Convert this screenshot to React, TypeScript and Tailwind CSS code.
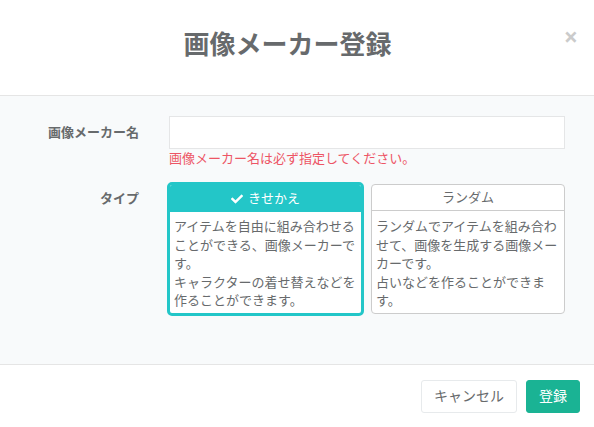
import React from "react";
import { FaCheck } from "react-icons/fa";

export default function App() {
  const font = { fontFamily: '"Open Sans", "Noto Sans CJK JP", sans-serif' };
  return (
    <div className="w-[594px] h-[427px] overflow-hidden bg-white text-[#676a6c] text-[13px] leading-[18.57px]" style={font}>
      {/* Header */}
      <div className="relative h-[96px] border-b border-[#e5e5e5] pt-[30px] pr-[19px] text-center">
        <h4 className="text-[26px] leading-[28px] font-bold text-[#676a6c]">画像メーカー登録</h4>
        <button className="absolute right-[16px] top-[22px] text-[25px] leading-[28px] font-bold text-black opacity-20">×</button>
      </div>

      {/* Body */}
      <div className="h-[268px] bg-[#f8fafb] pt-[20px]">
        <div className="flex">
          <label className="w-[139px] text-right font-bold pt-[7px]">画像メーカー名</label>
          <div className="ml-[30px] w-[396px]">
            <input className="block w-full h-[33px] bg-white border border-[#e5e6e7] outline-none" />
            <div className="text-[#ed5565] leading-[19px]">画像メーカー名は必ず指定してください。</div>
          </div>
        </div>

        <div className="flex mt-[14px]">
          <label className="w-[139px] text-right font-bold pt-[7px]">タイプ</label>
          <div className="ml-[28px] flex items-start gap-[7px]">
            <div className="w-[197px] h-[134px] border-[3px] border-[#23c6c8] rounded-[5px] bg-white overflow-hidden">
              <div className="h-[27px] bg-[#23c6c8] text-white flex items-center justify-center gap-[5px]">
                <FaCheck className="w-[12px] h-[12px]" />
                <span>きせかえ</span>
              </div>
              <div className="px-[4px] pt-[5px]">
                アイテムを自由に組み合わせることができる、画像メーカーです。
                <br />
                キャラクターの着せ替えなどを作ることができます。
              </div>
            </div>
            <div className="mt-[2px] w-[194px] h-[130px] border border-[#cccccc] rounded-[4px] bg-white">
              <div className="h-[26px] border-b border-[#cccccc] flex items-center justify-center">ランダム</div>
              <div className="px-[4px] pt-[6px]">
                ランダムでアイテムを組み合わせて、画像を生成する画像メーカーです。
                <br />
                占いなどを作ることができます。
              </div>
            </div>
          </div>
        </div>
      </div>

      {/* Footer */}
      <div className="border-t border-[#e5e5e5] pt-[15px] pr-[14px] flex justify-end gap-[9px]">
        <button className="h-[33px] px-[12px] bg-white border border-[#e7eaec] rounded-[3px] text-[14px] text-[#676a6c]">キャンセル</button>
        <button className="h-[33px] px-[12px] bg-[#1ab394] border border-[#1ab394] rounded-[3px] text-[14px] text-white">登録</button>
      </div>
    </div>
  );
}
